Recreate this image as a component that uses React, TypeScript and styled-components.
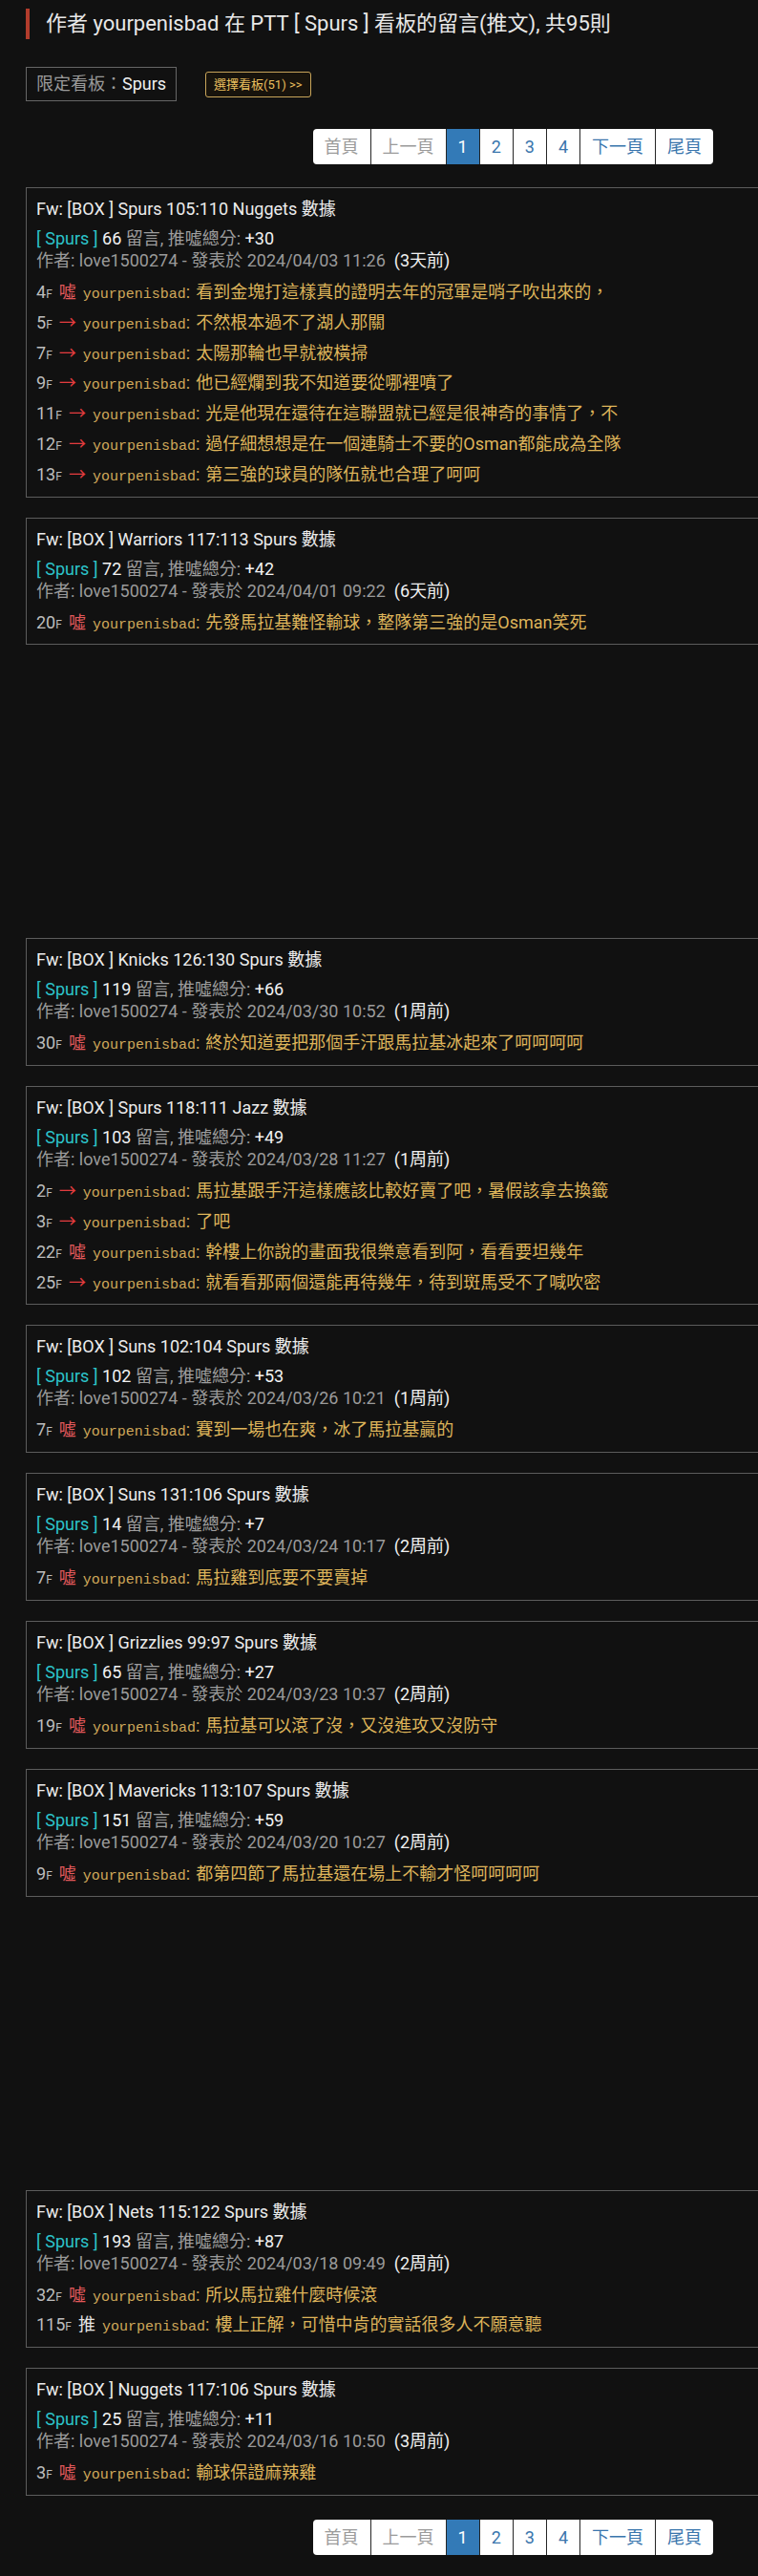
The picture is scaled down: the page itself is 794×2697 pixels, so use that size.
import React from 'react';
import styled, { createGlobalStyle, css } from 'styled-components';

type Mark = '噓' | '→' | '推';

interface Comment {
  floor: number;
  mark: Mark;
  text: string;
}

interface Post {
  title: string;
  count: number;
  score: string;
  date: string;
  ago: string;
  comments: Comment[];
  adAfter?: boolean;
}

const USER = 'yourpenisbad';

const posts: Post[] = [
  {
    title: 'Fw: [BOX ] Spurs 105:110 Nuggets 數據',
    count: 66,
    score: '+30',
    date: '2024/04/03 11:26',
    ago: '3天前',
    comments: [
      { floor: 4, mark: '噓', text: '看到金塊打這樣真的證明去年的冠軍是哨子吹出來的，' },
      { floor: 5, mark: '→', text: '不然根本過不了湖人那關' },
      { floor: 7, mark: '→', text: '太陽那輪也早就被橫掃' },
      { floor: 9, mark: '→', text: '他已經爛到我不知道要從哪裡噴了' },
      { floor: 11, mark: '→', text: '光是他現在還待在這聯盟就已經是很神奇的事情了，不' },
      { floor: 12, mark: '→', text: '過仔細想想是在一個連騎士不要的Osman都能成為全隊' },
      { floor: 13, mark: '→', text: '第三強的球員的隊伍就也合理了呵呵' },
    ],
  },
  {
    title: 'Fw: [BOX ] Warriors 117:113 Spurs 數據',
    count: 72,
    score: '+42',
    date: '2024/04/01 09:22',
    ago: '6天前',
    comments: [{ floor: 20, mark: '噓', text: '先發馬拉基難怪輸球，整隊第三強的是Osman笑死' }],
    adAfter: true,
  },
  {
    title: 'Fw: [BOX ] Knicks 126:130 Spurs 數據',
    count: 119,
    score: '+66',
    date: '2024/03/30 10:52',
    ago: '1周前',
    comments: [{ floor: 30, mark: '噓', text: '終於知道要把那個手汗跟馬拉基冰起來了呵呵呵呵' }],
  },
  {
    title: 'Fw: [BOX ] Spurs 118:111 Jazz 數據',
    count: 103,
    score: '+49',
    date: '2024/03/28 11:27',
    ago: '1周前',
    comments: [
      { floor: 2, mark: '→', text: '馬拉基跟手汗這樣應該比較好賣了吧，暑假該拿去換籤' },
      { floor: 3, mark: '→', text: '了吧' },
      { floor: 22, mark: '噓', text: '幹樓上你說的畫面我很樂意看到阿，看看要坦幾年' },
      { floor: 25, mark: '→', text: '就看看那兩個還能再待幾年，待到斑馬受不了喊吹密' },
    ],
  },
  {
    title: 'Fw: [BOX ] Suns 102:104 Spurs 數據',
    count: 102,
    score: '+53',
    date: '2024/03/26 10:21',
    ago: '1周前',
    comments: [{ floor: 7, mark: '噓', text: '賽到一場也在爽，冰了馬拉基贏的' }],
  },
  {
    title: 'Fw: [BOX ] Suns 131:106 Spurs 數據',
    count: 14,
    score: '+7',
    date: '2024/03/24 10:17',
    ago: '2周前',
    comments: [{ floor: 7, mark: '噓', text: '馬拉雞到底要不要賣掉' }],
  },
  {
    title: 'Fw: [BOX ] Grizzlies 99:97 Spurs 數據',
    count: 65,
    score: '+27',
    date: '2024/03/23 10:37',
    ago: '2周前',
    comments: [{ floor: 19, mark: '噓', text: '馬拉基可以滾了沒，又沒進攻又沒防守' }],
  },
  {
    title: 'Fw: [BOX ] Mavericks 113:107 Spurs 數據',
    count: 151,
    score: '+59',
    date: '2024/03/20 10:27',
    ago: '2周前',
    comments: [{ floor: 9, mark: '噓', text: '都第四節了馬拉基還在場上不輸才怪呵呵呵呵' }],
    adAfter: true,
  },
  {
    title: 'Fw: [BOX ] Nets 115:122 Spurs 數據',
    count: 193,
    score: '+87',
    date: '2024/03/18 09:49',
    ago: '2周前',
    comments: [
      { floor: 32, mark: '噓', text: '所以馬拉雞什麼時候滾' },
      { floor: 115, mark: '推', text: '樓上正解，可惜中肯的實話很多人不願意聽' },
    ],
  },
  {
    title: 'Fw: [BOX ] Nuggets 117:106 Spurs 數據',
    count: 25,
    score: '+11',
    date: '2024/03/16 10:50',
    ago: '3周前',
    comments: [{ floor: 3, mark: '噓', text: '輸球保證麻辣雞' }],
  },
];

const pages = [
  { label: '首頁', state: 'disabled' },
  { label: '上一頁', state: 'disabled' },
  { label: '1', state: 'active' },
  { label: '2', state: 'link' },
  { label: '3', state: 'link' },
  { label: '4', state: 'link' },
  { label: '下一頁', state: 'link' },
  { label: '尾頁', state: 'link' },
] as const;

const Pager: React.FC = () => (
  <PagerRow>
    <PagerList>
      {pages.map((p) => (
        <PageItem key={p.label} $state={p.state}>
          {p.label}
        </PageItem>
      ))}
    </PagerList>
  </PagerRow>
);

const PostCard: React.FC<{ post: Post }> = ({ post }) => (
  <Card>
    <CardTitle>{post.title}</CardTitle>
    <BoardLine>
      <Board>[ Spurs ]</Board> <Strong>{post.count}</Strong> 留言, 推噓總分: <Strong>{post.score}</Strong>
    </BoardLine>
    <AuthorLine>
      作者: love1500274 - 發表於 {post.date}
      <Ago>({post.ago})</Ago>
    </AuthorLine>
    {post.comments.map((c) => (
      <CommentRow key={c.floor}>
        <Floor>
          {c.floor}
          <small>F</small>
        </Floor>
        <Tag $mark={c.mark}>{c.mark}</Tag>
        <User>{USER}</User>
        <Colon>:</Colon>
        <CommentText>{c.text}</CommentText>
      </CommentRow>
    ))}
  </Card>
);

export default function App() {
  return (
    <>
      <GlobalStyle />
      <Page>
        <Header>作者 yourpenisbad 在 PTT [ Spurs ] 看板的留言(推文), 共95則</Header>
        <FilterRow>
          <FilterBox>
            限定看板：<b>Spurs</b>
          </FilterBox>
          <SelectButton>選擇看板(51) &gt;&gt;</SelectButton>
        </FilterRow>
        <Pager />
        <CardList>
          {posts.map((post) => (
            <React.Fragment key={post.title}>
              <PostCard post={post} />
              {post.adAfter && <AdSlot />}
            </React.Fragment>
          ))}
        </CardList>
        <BottomPager>
          <Pager />
        </BottomPager>
      </Page>
    </>
  );
}

const GlobalStyle = createGlobalStyle`
  html, body {
    margin: 0;
    padding: 0;
    background: #111111;
    overflow-x: hidden;
  }
  body {
    font-family: Roboto, "Noto Sans CJK TC", sans-serif;
    color: #e6e6e6;
  }
`;

const Page = styled.div`
  display: flex;
  flex-direction: column;
  padding: 9px 0 22px 27px;
`;

const Header = styled.h1`
  margin: 0;
  border-left: 4px solid #b23c2c;
  padding-left: 17px;
  height: 32px;
  line-height: 32px;
  font-size: 22px;
  font-weight: 400;
  color: #e8e8e8;
  white-space: nowrap;
`;

const FilterRow = styled.div`
  display: flex;
  align-items: center;
  gap: 30px;
  margin-top: 29px;
`;

const FilterBox = styled.div`
  height: 34px;
  line-height: 34px;
  padding: 0 10px;
  border: 1px solid #666;
  font-size: 18px;
  color: #9a9a9a;

  b {
    font-weight: 400;
    color: #f0f0f0;
  }
`;

const SelectButton = styled.div`
  height: 25px;
  line-height: 25px;
  padding: 0 8px;
  border: 1px solid #c9a55a;
  border-radius: 3px;
  background: #17130c;
  font-size: 13px;
  color: #e8be5e;
`;

const PagerRow = styled.div`
  display: flex;
  justify-content: flex-end;
  padding-right: 47px;
  margin-top: 29px;
`;

const PagerList = styled.div`
  display: flex;
  background: #fff;
  border-radius: 4px;
  overflow: hidden;
`;

const PageItem = styled.div<{ $state: 'disabled' | 'active' | 'link' }>`
  height: 37px;
  line-height: 37px;
  padding: 0 12px;
  font-size: 18px;
  color: #3a76ad;
  & + & {
    border-left: 1px solid #262626;
  }
  ${(p) =>
    p.$state === 'disabled' &&
    css`
      color: #9b9b9b;
    `}
  ${(p) =>
    p.$state === 'active' &&
    css`
      background: #337ab7;
      color: #fff;
    `}
`;

const BottomPager = styled.div`
  margin-top: -4px;
`;

const CardList = styled.div`
  display: flex;
  flex-direction: column;
  gap: 21px;
  margin-top: 24px;
`;

const Card = styled.div`
  width: 800px;
  border: 1px solid #5c5c5c;
  padding: 10px 10px 7px;
  font-size: 18px;
`;

const CardTitle = styled.div`
  line-height: 24px;
  margin-bottom: 7px;
  color: #ececec;
  white-space: nowrap;
`;

const BoardLine = styled.div`
  line-height: 24px;
  color: #9e9e9e;
  white-space: nowrap;
`;

const Board = styled.span`
  color: #2cc3c9;
`;

const Strong = styled.span`
  color: #f2f2f2;
`;

const AuthorLine = styled.div`
  line-height: 22px;
  margin-bottom: 6px;
  color: #9a9a9a;
  white-space: nowrap;
`;

const Ago = styled.span`
  margin-left: 9px;
  color: #f0f0f0;
`;

const CommentRow = styled.div`
  height: 31.8px;
  line-height: 31.8px;
  white-space: nowrap;
`;

const Floor = styled.span`
  color: #bdbdbd;
  margin-right: 7px;

  small {
    font-size: 12px;
  }
`;

const Tag = styled.span<{ $mark: Mark }>`
  margin-right: 7px;
  color: ${(p) => (p.$mark === '噓' ? '#e0585a' : p.$mark === '推' ? '#e6e6e6' : '#e23c3f')};
`;

const User = styled.span`
  font-family: "Liberation Mono", "Courier New", monospace;
  font-size: 15px;
  color: #cfa85a;
`;

const Colon = styled.span`
  color: #cfa85a;
  margin-right: 6px;
`;

const CommentText = styled.span`
  color: #deb45a;
`;

const AdSlot = styled.div`
  height: 265px;
`;
